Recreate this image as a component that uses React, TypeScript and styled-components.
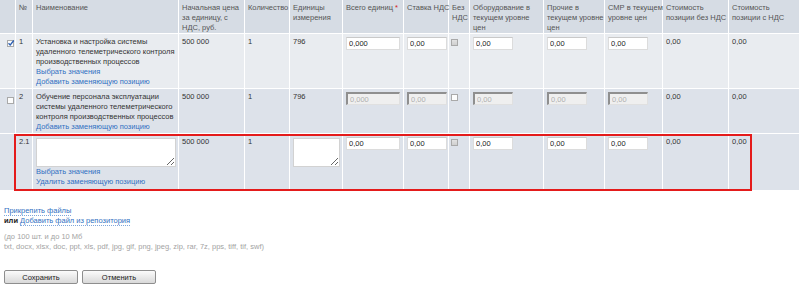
import React from "react";
import styled, { createGlobalStyle } from "styled-components";

const GlobalStyle = createGlobalStyle`
  body {
    margin: 0;
    background: #fff;
    font-family: "Liberation Sans", Arial, sans-serif;
    font-size: 7.5px;
    color: #333;
  }
`;

const Page = styled.div`
  width: 800px;
`;

const TableWrap = styled.div`
  position: relative;
`;

const Table = styled.table`
  width: 800px;
  table-layout: fixed;
  border-collapse: separate;
  border-spacing: 0;
`;

const Col = styled.col<{ $w: number }>`
  width: ${(p) => p.$w}px;
`;

const Th = styled.th`
  background: #d6dce4;
  color: #555;
  font-weight: normal;
  text-align: left;
  vertical-align: top;
  padding: 3px 0 0 3px;
  line-height: 10px;
  border-right: 1px solid #fff;
  border-bottom: 1px solid #fff;
  white-space: nowrap;
`;

const Req = styled.span`
  color: #d42020;
`;

const Tr = styled.tr<{ $bg: string }>`
  background: ${(p) => p.$bg};
`;

const Td = styled.td<{ $pt?: number; $pb?: number }>`
  vertical-align: top;
  padding: ${(p) => p.$pt ?? 3}px 2px ${(p) => p.$pb ?? 1}px 3px;
  line-height: 10px;
  border-right: 1px solid #fff;
  border-bottom: 1px solid #fff;
  color: #333;
  white-space: nowrap;
  overflow: hidden;
`;

const CheckCell = styled(Td)<{ $pl?: number }>`
  padding: ${(p) => p.$pt ?? 5}px 0 0 ${(p) => p.$pl ?? 7}px;
`;

const Link = styled.a`
  display: block;
  color: #3170c2;
  text-decoration: none;
  cursor: pointer;
`;

const Box = styled.span<{ $tone: "white" | "gray" }>`
  display: block;
  position: relative;
  width: 5px;
  height: 5px;
  margin-top: 1px;
  border: 1px solid #a9a9a9;
  background: ${(p) =>
    p.$tone === "white" ? "#fcfcfc" : "linear-gradient(#e2e2e2, #cfcfcf)"};

  svg {
    position: absolute;
    left: -1px;
    top: -2px;
  }
`;

const Field = styled.input<{ $w: number }>`
  box-sizing: border-box;
  width: ${(p) => p.$w}px;
  height: 13px;
  margin: 0;
  padding: 0 2px;
  border: 1px solid #dcdcdc;
  border-top-color: #c9c9c9;
  background: #fff;
  font-family: inherit;
  font-size: 7.5px;
  color: #222;
  outline: none;

  &:disabled {
    background: #efefef;
    color: #b0b0b0;
    border-color: #8f8f8f #e0e0e0 #e0e0e0 #8f8f8f;
    border-width: 2px 1px 1px 2px;
  }
`;

const Area = styled.textarea<{ $w: number }>`
  display: block;
  box-sizing: border-box;
  width: ${(p) => p.$w}px;
  height: 29px;
  margin: 1px 0 0;
  padding: 2px;
  border: 1px solid #d2d2d2;
  background: #fff;
  font-family: inherit;
  font-size: 7.5px;
`;

const Marker = styled.div`
  position: absolute;
  left: 14px;
  top: 134px;
  width: 738px;
  height: 57px;
  box-sizing: border-box;
  border: 2px solid #e41b1b;
  pointer-events: none;
`;

const Files = styled.div`
  padding: 15px 0 0 4px;
  line-height: 10px;
`;

const DotLink = styled.a`
  color: #3170c2;
  text-decoration: none;
  border-bottom: 1px dotted #7ea6dc;
  cursor: pointer;
`;

const Or = styled.b`
  color: #222;
`;

const Hint = styled.div`
  margin-top: 6px;
  color: #a3a3a3;
`;

const Actions = styled.div`
  display: flex;
  gap: 4px;
  padding: 18px 0 0 4px;
`;

const Button = styled.button`
  box-sizing: border-box;
  width: 74px;
  height: 14px;
  padding: 0;
  border: 1px solid #8e8e8e;
  border-radius: 2px;
  background: linear-gradient(#fbfbfb, #d9d9d9);
  font-family: inherit;
  font-size: 7.5px;
  color: #222;
`;

const widths = [16, 17, 146, 66, 45, 53, 61, 45, 21, 74, 61, 58, 66, 71];

const Tick = () => (
  <svg width="8" height="8" viewBox="0 0 8 8">
    <path d="M1.5 4.2 L3.2 6 L6.8 1.5" fill="none" stroke="#2b5fb3" strokeWidth="1.3" />
  </svg>
);

const App = () => {
  return (
    <Page>
      <GlobalStyle />
      <TableWrap>
        <Table>
          <colgroup>
            {widths.map((w, i) => (
              <Col key={i} $w={w} />
            ))}
          </colgroup>
          <thead>
            <tr>
              <Th />
              <Th>№</Th>
              <Th>Наименование</Th>
              <Th>
                Начальная цена
                <br />
                за единицу, с
                <br />
                НДС, руб.
              </Th>
              <Th>Количество</Th>
              <Th>
                Единицы
                <br />
                измерения
              </Th>
              <Th>
                Всего единиц <Req>*</Req>
              </Th>
              <Th>Ставка НДС</Th>
              <Th>
                Без
                <br />
                НДС
              </Th>
              <Th>
                Оборудование в
                <br />
                текущем уровне
                <br />
                цен
              </Th>
              <Th>
                Прочие в
                <br />
                текущем уровне
                <br />
                цен
              </Th>
              <Th>
                СМР в текущем
                <br />
                уровне цен
              </Th>
              <Th>
                Стоимость
                <br />
                позиции без НДС
              </Th>
              <Th>
                Стоимость
                <br />
                позиции с НДС
              </Th>
            </tr>
          </thead>
          <tbody>
            <Tr $bg="#e9ecf0">
              <CheckCell>
                <Box $tone="white">
                  <Tick />
                </Box>
              </CheckCell>
              <Td>1</Td>
              <Td>
                Установка и настройка системы
                <br />
                удаленного телеметрического контроля
                <br />
                производственных процессов
                <Link>Выбрать значения</Link>
                <Link>Добавить заменяющую позицию</Link>
              </Td>
              <Td>500 000</Td>
              <Td>1</Td>
              <Td>796</Td>
              <Td>
                <Field $w={54} defaultValue="0,000" />
              </Td>
              <Td>
                <Field $w={40} defaultValue="0,00" />
              </Td>
              <CheckCell $pt={4} $pl={2}>
                <Box $tone="gray" />
              </CheckCell>
              <Td>
                <Field $w={40} defaultValue="0,00" />
              </Td>
              <Td>
                <Field $w={40} defaultValue="0,00" />
              </Td>
              <Td>
                <Field $w={40} defaultValue="0,00" />
              </Td>
              <Td>0,00</Td>
              <Td>0,00</Td>
            </Tr>
            <Tr $bg="#dde2ea">
              <CheckCell $pt={7}>
                <Box $tone="white" />
              </CheckCell>
              <Td>2</Td>
              <Td>
                Обучение персонала эксплуатации
                <br />
                системы удаленного телеметрического
                <br />
                контроля производственных процессов
                <Link>Добавить заменяющую позицию</Link>
              </Td>
              <Td>500 000</Td>
              <Td>1</Td>
              <Td>796</Td>
              <Td>
                <Field $w={54} defaultValue="0,000" disabled />
              </Td>
              <Td>
                <Field $w={40} defaultValue="0,00" disabled />
              </Td>
              <CheckCell $pt={4} $pl={2}>
                <Box $tone="white" />
              </CheckCell>
              <Td>
                <Field $w={40} defaultValue="0,00" disabled />
              </Td>
              <Td>
                <Field $w={40} defaultValue="0,00" disabled />
              </Td>
              <Td>
                <Field $w={40} defaultValue="0,00" disabled />
              </Td>
              <Td>0,00</Td>
              <Td>0,00</Td>
            </Tr>
            <Tr $bg="#dde2ea">
              <Td />
              <Td>2.1</Td>
              <Td $pb={3}>
                <Area $w={140} />
                <Link>Выбрать значения</Link>
                <Link>Удалить заменяющую позицию</Link>
              </Td>
              <Td>500 000</Td>
              <Td>1</Td>
              <Td>
                <Area $w={47} />
              </Td>
              <Td>
                <Field $w={54} defaultValue="0,00" />
              </Td>
              <Td>
                <Field $w={40} defaultValue="0,00" />
              </Td>
              <CheckCell $pt={4} $pl={2}>
                <Box $tone="gray" />
              </CheckCell>
              <Td>
                <Field $w={40} defaultValue="0,00" />
              </Td>
              <Td>
                <Field $w={40} defaultValue="0,00" />
              </Td>
              <Td>
                <Field $w={40} defaultValue="0,00" />
              </Td>
              <Td>0,00</Td>
              <Td>0,00</Td>
            </Tr>
          </tbody>
        </Table>
        <Marker />
      </TableWrap>
      <Files>
        <div>
          <DotLink>Прикрепить файлы</DotLink>
        </div>
        <div>
          <Or>или</Or> <DotLink>Добавить файл из репозитория</DotLink>
        </div>
        <Hint>
          (до 100 шт. и до 10 Мб
          <br />
          txt, docx, xlsx, doc, ppt, xls, pdf, jpg, gif, png, jpeg, zip, rar, 7z, pps, tiff, tif, swf)
        </Hint>
      </Files>
      <Actions>
        <Button>Сохранить</Button>
        <Button>Отменить</Button>
      </Actions>
    </Page>
  );
};

export default App;
